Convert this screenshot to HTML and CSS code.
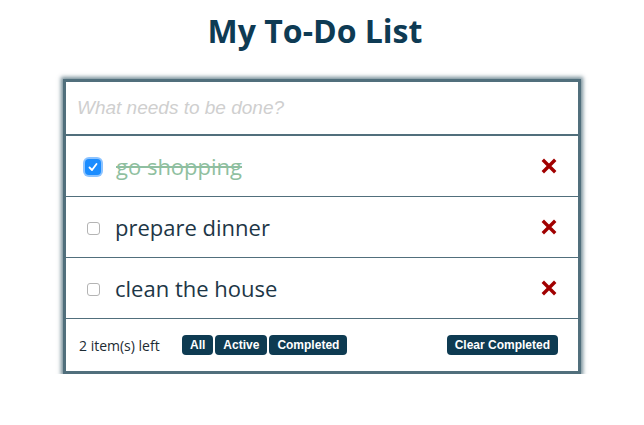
FILE: index.html
```html
<!DOCTYPE html>
<html>
<head>
<meta charset="utf-8">
<link rel="stylesheet" href="styles.css">
</head>
<body>
<h1 class="title">My To-Do List</h1>
<section class="todo-box">
  <div class="new-row"><input class="new-todo" type="text" placeholder="What needs to be done?"></div>
  <ul class="todo-list">
    <li class="todo-item done">
      <input class="check checked" type="checkbox" checked>
      <span class="todo-text">go shopping</span>
      <svg class="del" viewBox="0 0 16 16" width="16" height="16"><path d="M3 3 L13 13 M13 3 L3 13" stroke="#a10000" stroke-width="3.4" stroke-linecap="square"/></svg>
    </li>
    <li class="todo-item">
      <input class="check" type="checkbox">
      <span class="todo-text">prepare dinner</span>
      <svg class="del" viewBox="0 0 16 16" width="16" height="16"><path d="M3 3 L13 13 M13 3 L3 13" stroke="#a10000" stroke-width="3.4" stroke-linecap="square"/></svg>
    </li>
    <li class="todo-item">
      <input class="check" type="checkbox">
      <span class="todo-text">clean the house</span>
      <svg class="del" viewBox="0 0 16 16" width="16" height="16"><path d="M3 3 L13 13 M13 3 L3 13" stroke="#a10000" stroke-width="3.4" stroke-linecap="square"/></svg>
    </li>
  </ul>
  <footer class="footer">
    <span class="count">2 item(s) left</span>
    <div class="filters">
      <button class="btn">All</button>
      <button class="btn">Active</button>
      <button class="btn">Completed</button>
    </div>
    <button class="btn clear">Clear Completed</button>
  </footer>
</section>
</body>
</html>
```
FILE: styles.css
```css
* { box-sizing: border-box; }
body {
  margin: 0;
  font-family: "Open Sans", sans-serif;
  background: #fff;
  color: #1d3646;
}
.title {
  margin: 10px 0 0;
  padding-right: 14px;
  text-align: center;
  font-size: 32px;
  line-height: 42px;
  font-weight: 700;
  color: #0e3b54;
}
.todo-box {
  width: 518px;
  margin: 27px auto 0;
  border: 3px solid #516f7c;
  box-shadow: 0 0 4px 2px rgba(81, 111, 124, 0.8);
}
.new-row {
  border-bottom: 2px solid #516f7c;
}
.new-todo {
  display: block;
  width: 100%;
  height: 52px;
  border: none;
  outline: none;
  padding: 0 11px;
  font-family: "Liberation Sans", Arial, sans-serif;
  font-style: italic;
  font-size: 19px;
}
.new-todo::placeholder { color: #cfcfcf; }
.todo-list {
  list-style: none;
  margin: 0;
  padding: 0;
}
.todo-item {
  display: flex;
  align-items: center;
  height: 61px;
  border-bottom: 1px solid #516f7c;
  padding: 0 21px 0 19px;
}
.check {
  margin: 2px 15px 0 2px;
  width: 13px;
  height: 13px;
  appearance: none;
  border: 1px solid #b4b4b4;
  border-radius: 3px;
  background: #fff;
}
.check.checked {
  width: 16px;
  height: 16px;
  margin: 2px 15px 0 0;
  border: none;
  border-radius: 4px;
  background: #1a8cff url("data:image/svg+xml;utf8,<svg xmlns='http://www.w3.org/2000/svg' viewBox='0 0 16 16'><path d='M4.5 8.5 L7 11 L11.5 5' fill='none' stroke='white' stroke-width='1.8' stroke-linecap='round' stroke-linejoin='round'/></svg>") center/100% no-repeat;
  box-shadow: 0 0 0 2px #8cc3ff;
}
.todo-text {
  flex: 1;
  font-size: 22px;
  color: #1d3646;
}
.done .todo-text {
  color: #8fbfa0;
  text-decoration: line-through;
}
.del { display: block; }
.footer {
  display: flex;
  align-items: center;
  height: 52px;
  padding: 0 20px 0 13px;
}
.count {
  font-size: 14px;
  color: #1d2b33;
  width: 103px;
}
.filters {
  display: flex;
  gap: 2px;
  flex: 1;
}
.btn {
  font-family: "Liberation Sans", Arial, sans-serif;
  font-weight: 700;
  font-size: 12px;
  color: #fff;
  background: #0e3b52;
  border: none;
  border-radius: 4px;
  height: 20px;
  padding: 0 8px;
}
```
